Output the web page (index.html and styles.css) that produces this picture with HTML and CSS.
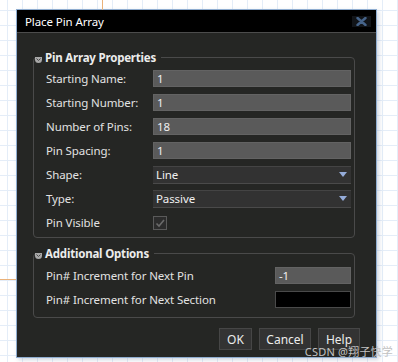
FILE: index.html
```html
<!DOCTYPE html>
<html lang="en">
<head>
    <meta charset="UTF-8">
    <meta name="viewport" content="width=device-width, initial-scale=1.0">
    <title>Place Pin Array</title>
    <link rel="stylesheet" href="styles.css">
</head>
<body>

<div class="wire wire-v"></div>
<div class="wire wire-h"></div>

<div class="dialog">
    <div class="titlebar">
        <span class="title">Place Pin Array</span>
        <span class="close">
            <svg width="11" height="9" viewBox="0 0 11 9"><path d="M1.5 1 L9.5 8 M9.5 1 L1.5 8" stroke="#46648a" stroke-width="2.4" stroke-linecap="round"/></svg>
        </span>
    </div>
    <div class="content">
        <fieldset class="group">
            <legend>
                <svg class="caret" width="7" height="7" viewBox="0 0 7 7"><path d="M0 1 H7 V3.5 Q7 7 3.5 7 Q0 7 0 3.5 Z" fill="#a8a8a8"/><path d="M1.5 2.5 L3.5 4.5 L5.5 2.5" fill="none" stroke="#4a4a4a" stroke-width="1"/></svg>Pin Array Properties
            </legend>
            <div class="rows props">
                <label>Starting Name:</label>
                <div class="field">1</div>
                <label>Starting Number:</label>
                <div class="field">1</div>
                <label>Number of Pins:</label>
                <div class="field">18</div>
                <label>Pin Spacing:</label>
                <div class="field">1</div>
                <label>Shape:</label>
                <div class="select">Line<svg width="8" height="5" viewBox="0 0 8 5"><path d="M0 0 H8 L4 5 Z" fill="#95acd9"/></svg></div>
                <label>Type:</label>
                <div class="select">Passive<svg width="8" height="5" viewBox="0 0 8 5"><path d="M0 0 H8 L4 5 Z" fill="#95acd9"/></svg></div>
                <label>Pin Visible</label>
                <div class="check-cell">
                    <span class="check"><svg width="12" height="12" viewBox="0 0 12 12"><path d="M2.5 6.5 L5 9 L10 3" fill="none" stroke="#6a6a6a" stroke-width="1.6"/></svg></span>
                </div>
            </div>
        </fieldset>

        <fieldset class="group extra">
            <legend>
                <svg class="caret" width="7" height="7" viewBox="0 0 7 7"><path d="M0 1 H7 V3.5 Q7 7 3.5 7 Q0 7 0 3.5 Z" fill="#a8a8a8"/><path d="M1.5 2.5 L3.5 4.5 L5.5 2.5" fill="none" stroke="#4a4a4a" stroke-width="1"/></svg>Additional Options
            </legend>
            <div class="rows options">
                <label>Pin# Increment for Next Pin</label>
                <div class="field">-1</div>
                <label>Pin# Increment for Next Section</label>
                <div class="field black"></div>
            </div>
        </fieldset>

        <div class="buttons">
            <button class="btn-ok">OK</button>
            <button class="btn-cancel">Cancel</button>
            <button class="btn-help">Help</button>
        </div>
    </div>
</div>

<div class="watermark">CSDN @翔子快学</div>

</body>
</html>
```

FILE: styles.css
```css
/* canvas behind the dialog */
body {
    margin: 0;
    height: 362px;
    overflow: hidden;
    font-family: "Noto Sans", "Open Sans", "Noto Sans CJK SC", sans-serif;
    font-size: 11.5px;
    letter-spacing: -0.1px;
    background-color: #ffffff;
    background-image:
        linear-gradient(to right, #e4edf8 1px, transparent 1px),
        linear-gradient(to bottom, #e4edf8 1px, transparent 1px);
    background-size: 15px 15px;
    background-position: 7px 10px;
}
.wire {
    position: absolute;
    background: #eab27a;
}
.wire-v {
    left: 102px;
    top: 0;
    width: 1px;
    height: 10px;
}
.wire-h {
    left: 0;
    top: 279px;
    width: 16px;
    height: 1px;
}

.dialog {
    margin: 9px 0 0 16px;
    width: 359px;
    border: 1px solid #8fadd0;
    background: #252624;
    color: #e2e2e2;
    box-shadow: 2px 2px 4px rgba(120, 140, 170, 0.35);
}
.titlebar {
    height: 22px;
    display: flex;
    align-items: center;
    justify-content: space-between;
    padding-left: 8px;
    background: #000000;
    border-bottom: 1px solid #4c4c4c;
}
.title {
    color: #ffffff;
}
.close {
    width: 19px;
    height: 11px;
    margin-right: 5px;
    display: flex;
    align-items: center;
    justify-content: center;
    background: #111418;
}

.content {
    display: flex;
    flex-direction: column;
    padding-bottom: 7px;
}
.group {
    margin: 16px 21px 0 16px;
    padding: 4px 3px 6px 12px;
    border: 1px solid #4a4a4a;
    border-radius: 4px;
    min-width: 0;
}
.group.extra {
    margin-top: 7px;
    padding-top: 5px;
    padding-bottom: 9px;
}
legend {
    margin-left: -11px;
    padding: 0 5px 0 0;
    line-height: 17px;
    font-weight: bold;
    letter-spacing: -0.2px;
    color: #ececec;
}
.caret {
    margin-right: 3px;
    vertical-align: -1px;
}

.rows {
    display: grid;
    grid-auto-rows: 17px;
    row-gap: 7px;
    align-items: center;
}
.props {
    grid-template-columns: 107px 1fr;
}
.options {
    grid-template-columns: 229px 76px;
}
.field {
    height: 17px;
    box-sizing: border-box;
    padding-left: 3px;
    line-height: 15px;
    background: #5a5a5a;
    border: 1px solid #636363;
    color: #f0f0f0;
}
.field.black {
    background: #000000;
    border-color: #4a4a4a;
}
.select {
    height: 18px;
    box-sizing: border-box;
    display: flex;
    align-items: center;
    justify-content: space-between;
    padding: 0 4px 0 3px;
    background: #323232;
    border-top: 1px solid #444444;
    border-bottom: 1px solid #4a4a4a;
    color: #f0f0f0;
}
.check-cell {
    display: flex;
    align-items: center;
}
.check {
    width: 14px;
    height: 14px;
    box-sizing: border-box;
    display: flex;
    align-items: center;
    justify-content: center;
    border: 1px solid #5a5a5a;
    background: #2c2c2c;
}

.buttons {
    display: flex;
    justify-content: flex-end;
    gap: 7px;
    margin: 10px 16px 0 0;
}
button {
    height: 22px;
    padding: 0;
    font-family: inherit;
    font-size: 12px;
    color: #ececec;
    background: #333333;
    border: 1px solid #464646;
}
.btn-ok {
    width: 33px;
}
.btn-cancel {
    width: 52px;
}
.btn-help {
    width: 42px;
}

.watermark {
    position: absolute;
    right: 5px;
    top: 343px;
    font-size: 11px;
    color: #c2c2c2;
    letter-spacing: 0.2px;
}
```
